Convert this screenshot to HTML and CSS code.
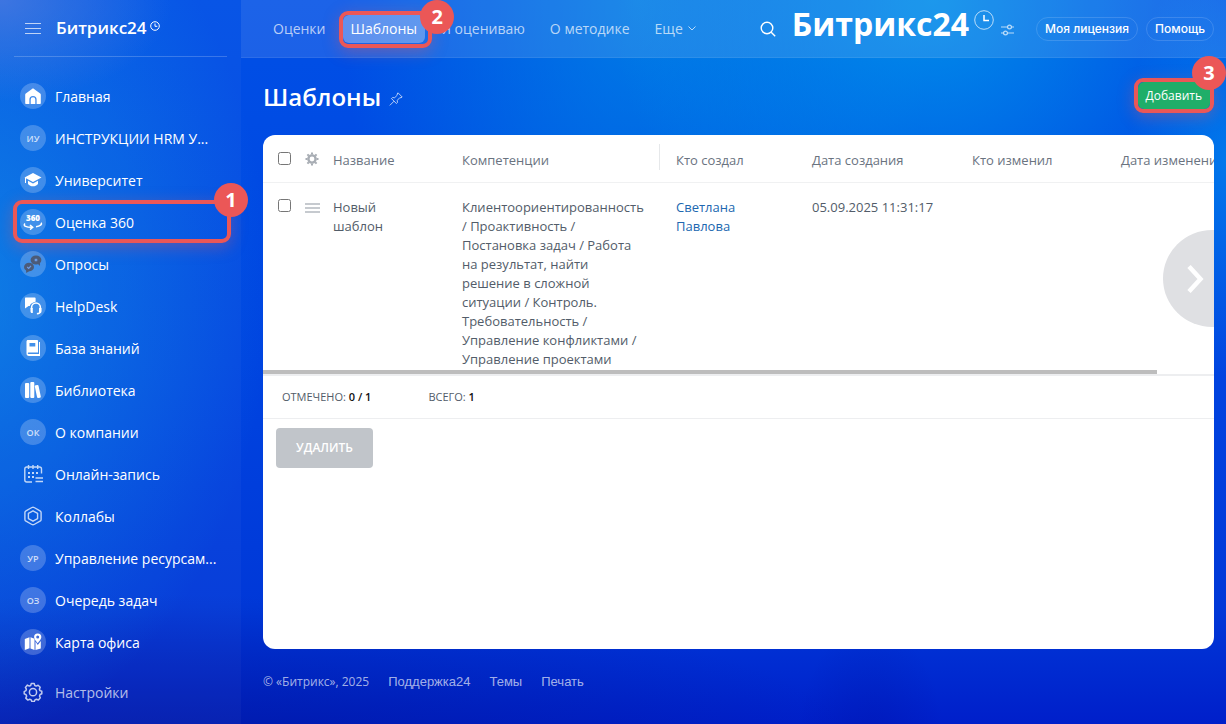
FILE: index.html
```html
<!DOCTYPE html>
<html lang="ru">
<head>
<meta charset="utf-8">
<meta name="viewport" content="width=device-width, initial-scale=1">
<title>Шаблоны</title>
<link rel="stylesheet" href="styles.css">
</head>
<body>
<div class="app">
  <aside class="sidebar">
    <div class="side-head">
      <button class="icon-btn" type="button" aria-label="Меню">
        <svg width="16" height="13" viewBox="0 0 16 13" stroke="currentColor"><path d="M0 1.5h16M0 6.5h16M0 11.5h16"/></svg>
      </button>
      <a class="side-logo" href="#">Битрикс24
        <svg width="10" height="10" viewBox="0 0 10 10" fill="none" stroke="currentColor"><circle cx="5" cy="5" r="4.3"/><path d="M5 2.5V5.300h2.300"/></svg>
      </a>
    </div>
    <nav class="menu" aria-label="Главное меню">
      <a class="item" href="#"><span class="dot"><svg width="18" height="18" viewBox="0 0 18 18"><path fill="#fff" fill-rule="evenodd" d="M9 1.200 1.800 6.500c-.4.3-.6.7-.6 1.200v8.200c0 .6.4 1 1 1h13.600c.6 0 1-.4 1-1V7.700c0-.5-.2-.9-.6-1.200zM5.400 16.900v-4.400a3.600 3.600 0 0 1 7.200 0v4.400h-1.300v-4.300a2.300 2.300 0 0 0-4.600 0v4.300z"/></svg></span>Главная</a>
      <a class="item" href="#"><span class="dot">ИУ</span>ИНСТРУКЦИИ HRM У...</a>
      <a class="item" href="#"><span class="dot"><svg width="18" height="16" viewBox="0 0 18 16"><path fill="#fff" d="M9 1 0.500 5.400 9 9.900l8.500-4.500zM4 8.700v3.200c1.300 1.600 3 2.300 5 2.300s3.700-.7 5-2.300V8.700l-5 2.700z"/><path d="M1.500 6v5" stroke="#fff"/></svg></span>Университет</a>
      <a class="item marked" href="#"><span class="dot dot-360"><span>360</span><svg width="20" height="8" viewBox="0 0 20 8" fill="none" stroke="#fff" stroke-width="1.500"><path d="M2 1.500C-.5 4 4 5.500 9 5.300M7 3l2.700 2.300L7 7.600M13 4.800c4-.6 6.500-2.500 5-4"/></svg></span>Оценка 360<span class="frame"></span><span class="badge">1</span></a>
      <a class="item" href="#"><span class="dot"><svg width="20" height="20" viewBox="0 0 20 20"><g fill="#4c5b78"><ellipse cx="13" cy="6" rx="5.400" ry="4.600"/><path d="m14 9 3 3 0-5z"/><ellipse cx="6" cy="13" rx="5" ry="4.300"/><path d="m3 14 .2 5 4-2.500z"/></g><path d="m11.800 4.800 2.400 2.400m0-2.400-2.400 2.400M4.200 13l1.500 1.400L8 11.800" stroke="#6d9de8" fill="none" stroke-width="1.200"/></svg></span>Опросы</a>
      <a class="item" href="#"><span class="dot"><svg width="18" height="18" viewBox="0 0 18 18"><path fill="#fff" d="M1.500.5h9.300c.5 0 .8.300.8.800v3.500C8 5.400 6 7.500 5.800 9H4.500L1 11.500V1.200c0-.4.200-.7.500-.7z"/><path fill="none" stroke="#fff" stroke-width="1.500" d="M7.600 12v-1.500a4.400 4.400 0 0 1 8.800 0V14c0 1.700-1.300 2.700-3.500 2.700"/><path fill="#fff" d="M6.500 11h2.300v5H8c-1 0-1.500-.8-1.500-1.800zm8.500 0h2.500v3.200c0 1-.5 1.800-1.500 1.800h-1z"/></svg></span>HelpDesk</a>
      <a class="item" href="#"><span class="dot"><svg width="16" height="18" viewBox="0 0 16 18"><path fill="#fff" fill-rule="evenodd" d="M3 1h9c.6 0 1 .4 1 1v11.500H3.500c-1 0-1 1.500 0 1.500H15v2H4c-1.600 0-2.500-1-2.500-2.500V2.500C1.500 1.600 2 1 3 1zm1.500 3v3.500h5.800V4z"/><path d="M14.500 3v13" stroke="#fff"/></svg></span>База знаний</a>
      <a class="item" href="#"><span class="dot"><svg width="18" height="18" viewBox="0 0 18 18" fill="#fff"><rect x="1" y="2" width="4.200" height="15" rx="1"/><rect x="6.300" y="1" width="4" height="16" rx="1"/><rect x="11.800" y="4" width="3.800" height="13" rx="1" transform="rotate(-12 13.700 10)"/></svg></span>Библиотека</a>
      <a class="item" href="#"><span class="dot">ОК</span>О компании</a>
      <a class="item" href="#"><span class="dot bare"><svg width="21" height="20" viewBox="0 0 21 20" fill="none" stroke="currentColor" stroke-width="1.400"><path d="M18.500 9.500V5c0-1.200-.8-2-2-2H3.800c-1.200 0-2 .8-2 2v11c0 1.200.8 2 2 2H9M5.500 1v4M10 1v4M14.700 1v4"/><path d="M5 9h2m2 0h2m2 0h2M5 13h2m2 0h2" stroke-width="2"/><path d="M12.500 14H20M12.500 17.500H20"/></svg></span>Онлайн-запись</a>
      <a class="item" href="#"><span class="dot bare"><svg width="20" height="20" viewBox="0 0 20 20" fill="none" stroke="currentColor" stroke-width="1.400" stroke-linejoin="round"><path d="M8.900 1.500 3 4.800c-.7.400-1.100 1-1.100 1.800v6.800c0 .8.400 1.400 1.100 1.800l5.900 3.300c.7.400 1.500.4 2.200 0l5.900-3.300c.7-.4 1.100-1 1.100-1.800V6.600c0-.8-.4-1.400-1.100-1.800l-5.900-3.300c-.7-.4-1.500-.4-2.200 0z"/><path d="m10 4.800 4.600 2.600v5.200L10 15.200l-4.600-2.600V7.400z"/></svg></span>Коллабы</a>
      <a class="item" href="#"><span class="dot">УР</span>Управление ресурсам...</a>
      <a class="item" href="#"><span class="dot">ОЗ</span>Очередь задач</a>
      <a class="item" href="#"><span class="dot"><svg width="18" height="18" viewBox="0 0 18 18" fill="#fff"><path d="M.8 6 5.500 4.300v11L.8 17zM6.500 4.300l4 1.500V17l-4-1.600zM11.500 8.500 13.800 12l3-4v7.500L11.500 17z"/><path fill-rule="evenodd" d="M13.700.5a3.600 3.600 0 0 0-3.600 3.600c0 2.400 3.600 6.200 3.600 6.200s3.600-3.800 3.600-6.200A3.600 3.600 0 0 0 13.700.5zm0 2a1.500 1.500 0 1 1 0 3 1.500 1.500 0 0 1 0-3z"/></svg></span>Карта офиса</a>
      <a class="item settings" href="#"><span class="dot bare"><svg width="20" height="20" viewBox="0 0 20 20" fill="none" stroke="currentColor" stroke-width="1.500" stroke-linejoin="round"><path d="m8.300 1.500-.6 2-1.400.6-1.900-1-2 2.300 1 1.800-.5 1.500-1.700.9v2.200l1.800.8.600 1.500-.8 2 2.100 2 1.800-.9 1.500.7.700 1.700h2.400l.6-1.700 1.500-.7 2 .8 1.900-2.200-.8-1.800.6-1.500 1.700-.8V9.300l-1.800-.7-.6-1.500.8-1.900-2.100-2-1.900.9-1.400-.6-.6-2z"/><circle cx="10" cy="10.200" r="3.600"/></svg></span>Настройки</a>
    </nav>
  </aside>

  <div class="page">
    <header class="top">
      <nav class="tabs" aria-label="Разделы">
        <a class="tab" href="#">Оценки</a>
        <a class="tab active" href="#">Шаблоны<span class="frame"></span><span class="badge">2</span></a>
        <a class="tab" href="#">Я оцениваю</a>
        <a class="tab" href="#">О методике</a>
        <button class="tab" type="button">Еще <svg width="8" height="5" viewBox="0 0 8 5" fill="none" stroke="currentColor"><path d="m.5.5 3.500 3.500L7.500.5"/></svg></button>
      </nav>
      <div class="tools">
        <button class="icon-btn search" type="button" aria-label="Поиск">
          <svg width="16" height="16" viewBox="0 0 16 16" fill="none" stroke="#fff" stroke-width="1.400"><circle cx="7" cy="7" r="5.800"/><path d="m11.200 11.200 4 4"/></svg>
        </button>
        <a class="logo" href="#">Битрикс24</a>
        <svg class="clock" width="20" height="20" viewBox="0 0 20 20" fill="none" stroke="#fff"><circle cx="10" cy="10" r="9.300" opacity=".7"/><path d="M10 5v5.500h5" stroke-width="1.500"/></svg>
        <button class="icon-btn sliders" type="button" aria-label="Параметры">
          <svg width="13" height="12" viewBox="0 0 13 12" fill="none" stroke="currentColor" stroke-width="1.200"><path d="M0 3h6.500M10.500 3H13M0 9h2.500M6.500 9H13"/><circle cx="8.500" cy="3" r="1.900"/><circle cx="4.500" cy="9" r="1.900"/></svg>
        </button>
        <button class="pill" type="button">Моя лицензия</button>
        <button class="pill" type="button">Помощь</button>
      </div>
    </header>

    <main class="content">
      <div class="title-row">
        <h1>Шаблоны</h1>
        <button class="icon-btn pin" type="button" aria-label="Закрепить">
          <svg width="14" height="14" viewBox="0 0 14 14" fill="none" stroke="currentColor"><path d="m9 .8 4.200 4.200-1.300.8-1-.2L8.300 8.300l.1 2.200-1 1L2.500 6.600l1-1 2.200.1 2.600-2.600-.2-1zM5 9.200.8 13.400"/></svg>
        </button>
        <button class="add" type="button">Добавить<span class="frame"></span><span class="badge">3</span></button>
      </div>

      <section class="card">
        <div class="scroller">
          <table class="grid">
            <colgroup><col class="c-check"><col class="c-gear"><col class="c-name"><col class="c-comp"><col class="c-by"><col class="c-date"><col class="c-mod"><col class="c-moddate"></colgroup>
            <thead>
              <tr>
                <th class="check"><input type="checkbox" aria-label="Выбрать все"></th>
                <th class="ctl"><button class="icon-btn gear" type="button" aria-label="Настройка таблицы"><svg width="14" height="14" viewBox="0 0 14 14" fill="none" stroke="currentColor"><circle cx="7" cy="7" r="3.600" stroke-width="2.400"/><path stroke-width="2" d="M7 .5v2M7 11.500v2M.5 7h2M11.500 7h2M2.400 2.400l1.400 1.400M10.200 10.200l1.400 1.400M2.400 11.600l1.400-1.400M10.200 3.800l1.400-1.400"/></svg></button></th>
                <th>Название</th><th class="split">Компетенции</th><th>Кто создал</th><th>Дата создания</th><th>Кто изменил</th><th>Дата изменения</th>
              </tr>
            </thead>
            <tbody>
              <tr>
                <td class="check"><input type="checkbox" aria-label="Выбрать строку"></td>
                <td class="ctl"><button class="icon-btn rows" type="button" aria-label="Действия"><svg width="15" height="10" viewBox="0 0 15 10" stroke="currentColor" stroke-width="2"><path d="M0 1h15M0 5h15M0 9h15"/></svg></button></td>
                <td class="name">Новый шаблон</td>
                <td>Клиентоориентированность / Проактивность / Постановка задач / Работа на результат, найти решение в сложной ситуации / Контроль. Требовательность / Управление конфликтами / Управление проектами</td>
                <td><a href="#">Светлана Павлова</a></td>
                <td>05.09.2025 11:31:17</td>
                <td></td><td></td>
              </tr>
            </tbody>
          </table>
          <div class="bar"></div>
          <button class="next" type="button" aria-label="Прокрутить вправо"><svg width="18" height="28" viewBox="0 0 18 28" fill="none" stroke="#fff" stroke-width="4.500"><path d="m2 1.500 11.500 12.500L2 26.500"/></svg></button>
        </div>
        <div class="totals"><span>ОТМЕЧЕНО: <b>0 / 1</b></span><span>ВСЕГО: <b>1</b></span></div>
        <div class="actions"><button class="delete" type="button" disabled>УДАЛИТЬ</button></div>
      </section>

      <footer class="foot">
        <span class="copy">© «Битрикс», 2025</span>
        <a href="#">Поддержка24</a><a href="#">Темы</a><a href="#">Печать</a>
      </footer>
    </main>
  </div>
</div>
</body>
</html>
```
FILE: styles.css
```css
* { box-sizing: border-box; }

body {
  margin: 0;
  font-family: "Open Sans", "Noto Sans", sans-serif;
  font-size: 13px;
  color: #525c69;
  background:
    radial-gradient(ellipse 14% 14% at 0% 0%, rgba(90, 125, 220, .6), transparent),
    radial-gradient(ellipse 25% 62% at -3% 40%, rgba(10, 140, 230, .75), transparent),
    radial-gradient(ellipse 26% 45% at 76% 0%, rgba(0, 160, 235, .75), transparent),
    radial-gradient(ellipse 24% 65% at 52% 0%, rgba(0, 150, 230, .6), transparent),
    radial-gradient(ellipse 8% 30% at 100% 22%, rgba(0, 150, 240, .6), transparent),
    radial-gradient(ellipse 6% 16% at 71% 102%, rgba(0, 10, 150, .25), transparent),
    radial-gradient(ellipse 60% 22% at 12% 104%, rgba(0, 20, 130, .45), transparent),
    linear-gradient(180deg, #0050e6 0%, #0044e0 50%, #0038d8 84%, #001fca 100%);
  background-attachment: fixed;
}

button { font: inherit; color: inherit; cursor: pointer; }
a { color: inherit; text-decoration: none; }
.icon-btn { display: flex; padding: 0; border: 0; background: none; }

.app { display: flex; min-height: 100vh; }

/* Sidebar */
.sidebar {
  display: flex;
  flex-direction: column;
  flex: 0 0 241px;
  background: rgba(255, 255, 255, .03);
  color: #fff;
}
.side-head {
  display: flex;
  align-items: center;
  gap: 15px;
  height: 57px;
  margin: 0 14px;
  padding-left: 11px;
  border-bottom: 1px solid rgba(255, 255, 255, .2);
}
.side-head .icon-btn { color: rgba(255, 255, 255, .7); }
.side-logo { display: flex; gap: 3px; font-size: 17px; font-weight: 600; line-height: 24px; }
.side-logo svg { margin-top: 5px; }
.menu { display: flex; flex: 1; flex-direction: column; padding: 18px 0 11px; font-size: 14px; }
.item { position: relative; display: flex; align-items: center; gap: 9px; height: 42px; padding-left: 20px; white-space: nowrap; }
.settings { margin-top: auto; color: rgba(255, 255, 255, .7); }
.dot {
  display: flex;
  align-items: center;
  justify-content: center;
  width: 26px;
  height: 26px;
  border-radius: 50%;
  background: rgba(255, 255, 255, .22);
  color: rgba(255, 255, 255, .75);
  font-size: 9px;
  font-weight: 600;
}
.bare { background: none; }
.dot-360 { flex-direction: column; color: #fff; font-size: 8px; font-weight: 800; line-height: 8px; }

/* Numbered callouts */
.frame {
  position: absolute;
  inset: -1px 10px 0 13px;
  border: 4px solid #eb5757;
  border-radius: 9px;
  box-shadow: 0 4px 16px rgba(235, 87, 87, .35);
  pointer-events: none;
}
.badge {
  position: absolute;
  z-index: 2;
  top: -18px;
  right: -7px;
  width: 34px;
  height: 34px;
  border-radius: 50%;
  background: #eb5757;
  color: #fff;
  font: 700 20px/34px "Open Sans", sans-serif;
  text-align: center;
}

/* Top bar */
.page { display: flex; flex: 1; flex-direction: column; min-width: 0; }
.top {
  display: flex;
  align-items: center;
  justify-content: space-between;
  height: 58px;
  padding: 0 12px 0 24px;
  border-bottom: 1px solid rgba(255, 255, 255, .08);
  background: rgba(255, 255, 255, .11);
}
.tabs { display: flex; gap: 9px; font-size: 14px; }
.tab {
  position: relative;
  display: flex;
  align-items: center;
  gap: 5px;
  height: 28px;
  padding: 0 8px;
  border: 0;
  border-radius: 6px;
  background: none;
  color: rgba(255, 255, 255, .7);
  white-space: nowrap;
}
.active { background: rgba(255, 255, 255, .3); color: #fff; }
.add .frame { inset: -4px; }
.tab .frame { inset: -4px -7px -5px -4px; }
.tab .badge { top: -15px; right: -29px; }
.tools { display: flex; align-items: center; }
.logo { margin: 0 5px 10px 16px; color: #fff; font-size: 32px; font-weight: 700; line-height: 48px; }
.clock { align-self: flex-start; margin-top: 10px; }
.sliders { margin: 2px 22px 0 7px; color: rgba(255, 255, 255, .7); }
.pill {
  height: 24px;
  padding: 0 8px;
  border: 1px solid rgba(255, 255, 255, .14);
  border-radius: 12px;
  background: none;
  color: #fff;
  font: 500 12px "Inter", sans-serif;
  white-space: nowrap;
}
.pill + .pill { margin-left: 8px; }

/* Content */
.content { display: flex; flex: 1; flex-direction: column; padding: 20px 12px 0 22px; }
.title-row { display: flex; align-items: center; gap: 8px; height: 38px; color: #fff; }
h1 { margin: 0; font-size: 24px; font-weight: 600; line-height: 38px; }
.pin { margin-top: 4px; color: rgba(255, 255, 255, .7); }
.add {
  position: relative;
  height: 27px;
  margin: 0 4px 3px auto;
  padding: 0 8px;
  border: 0;
  border-radius: 6px;
  background: #1fae69;
  font-size: 12px;
}
.add .badge { top: -26px; right: -16px; }

.card { flex: 1; margin-top: 19px; border-radius: 12px; background: #fff; overflow: hidden; }
.scroller { position: relative; overflow: hidden; border-bottom: 2px solid #edeef0; }
.grid { width: 1014px; min-width: 100%; border-collapse: collapse; table-layout: fixed; }
.c-check { width: 34px; }
.c-gear { width: 20px; }
.c-name { width: 129px; }
.c-comp { width: 214px; }
.c-by { width: 136px; }
.c-date { width: 160px; }
.c-mod { width: 149px; }
th, td { padding: 0 0 0 16px; text-align: left; vertical-align: top; line-height: 19px; }
th { height: 47px; padding-top: 16px; border-bottom: 1px solid #f0f1f2; color: #6a737f; font-weight: 400; white-space: nowrap; }
td { padding: 15px 16px 1px; }
td.name { padding-right: 24px; }
.split { background: linear-gradient(#e6e8ea, #e6e8ea) right 9px / 1px 26px no-repeat; }
.grid .check { padding-right: 0; padding-left: 15px; }
.grid .ctl { padding-right: 0; padding-left: 8px; }
.check input { display: block; width: 13px; height: 13px; margin: 1px 0 0; }
.gear { margin-top: 1px; color: #a8adb4; }
.rows { margin-top: 5px; color: #c6cacf; }
td a { color: #2067b0; }
.bar { width: 94%; height: 4px; background: #bdbdbd; }
.next {
  position: absolute;
  top: 95px;
  right: -47px;
  width: 98px;
  height: 97px;
  padding: 0 0 0 24px;
  border: 0;
  border-radius: 50%;
  background: #dfe0e3;
  text-align: left;
}
.next svg { display: block; }
.totals { display: flex; gap: 57px; padding: 13px 19px; border-bottom: 1px solid #edeef0; font-size: 11px; line-height: 16px; }
.totals b { color: #111; font-weight: 600; }
.actions { padding: 9px 13px; }
.delete {
  height: 40px;
  padding: 0 20px;
  border: 0;
  border-radius: 4px;
  background: #c1c5ca;
  color: #fff;
  font-size: 12px;
  font-weight: 600;
}

.foot { display: flex; align-items: center; gap: 19px; height: 75px; padding-bottom: 10px; color: rgba(255, 255, 255, .65); font: 13px "Liberation Sans", sans-serif; }
.copy { font: 12px "Open Sans", sans-serif; }
```
